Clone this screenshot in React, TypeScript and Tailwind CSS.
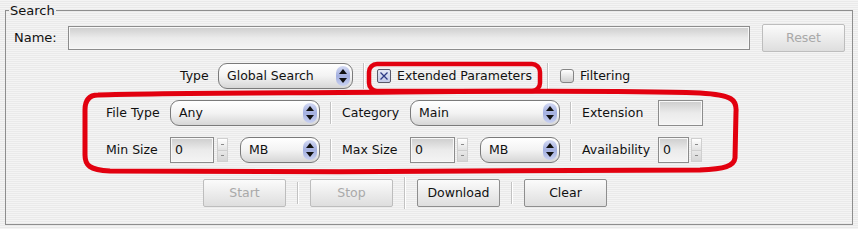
import React from "react";

const Sep: React.FC<{ h?: string }> = ({ h = "h-[22px]" }) => (
  <span className={`w-px ${h} bg-[#c2c2c2] shadow-[1px_0_0_#ffffff]`} />
);

const Arrows: React.FC = () => (
  <span className="absolute right-[2px] top-[2px] bottom-[2px] flex w-[14px] flex-col items-center justify-between rounded-full bg-gradient-to-b from-[#d4daf4] via-[#a3afdf] to-[#c8d0f0] py-[3px]">
    <svg width="8" height="5" viewBox="0 0 8 5">
      <path d="M0 5 L4 0 L8 5 Z" fill="#111" />
    </svg>
    <svg width="8" height="5" viewBox="0 0 8 5">
      <path d="M0 0 L8 0 L4 5 Z" fill="#111" />
    </svg>
  </span>
);

const Combo: React.FC<{ w: string; value: string }> = ({ w, value }) => (
  <div
    className={`relative flex h-[26px] ${w} items-center rounded-[9px] border border-[#7a7a7a] bg-gradient-to-b from-white via-[#f3f3f3] to-[#d6d6d6] pl-[8px]`}
  >
    {value}
    <Arrows />
  </div>
);

const Field: React.FC<{ w: string; h?: string; value?: string }> = ({ w, h = "h-[26px]", value }) => (
  <div
    className={`flex ${h} ${w} items-center border border-[#8c8c8c] bg-gradient-to-b from-[#cdcdcd] via-[#ebebeb] to-[#f4f4f4] pl-[4px] shadow-[inset_0_0_0_1px_#f8f8f8]`}
  >
    {value}
  </div>
);

const Spin: React.FC<{ w: string; gap: string }> = ({ w, gap }) => (
  <div className="flex items-center">
    <Field w={w} value="0" />
    <div className={`${gap} flex h-[24px] w-[11px] flex-col border border-[#cfcfcf]`}>
      <span className="flex flex-1 items-center justify-center border-b border-[#cfcfcf] bg-gradient-to-b from-white to-[#e2e2e2]">
        <span className="h-px w-[3px] bg-[#8a8a8a]" />
      </span>
      <span className="flex flex-1 items-center justify-center bg-gradient-to-b from-[#e8e8e8] to-[#d6d6d6]">
        <span className="h-px w-[3px] bg-[#8a8a8a]" />
      </span>
    </div>
  </div>
);

const Button: React.FC<{ label: string; disabled?: boolean }> = ({ label, disabled }) => (
  <div
    className={`flex h-[28px] w-[83px] items-center justify-center rounded-[2px] border bg-gradient-to-b from-[#fbfbfb] to-[#dedede] ${
      disabled ? "border-[#bdbdbd] text-[#a9a9a9]" : "border-[#8e8e8e] text-[#111]"
    }`}
  >
    {label}
  </div>
);

const Check: React.FC<{ checked?: boolean }> = ({ checked }) =>
  checked ? (
    <span className="flex h-[14px] w-[14px] items-center justify-center rounded-[2px] border border-[#5a5a6a] bg-gradient-to-b from-[#e4e7f6] to-[#c4cbe8]">
      <svg width="10" height="10" viewBox="0 0 10 10">
        <path d="M1.5 1.5 L8.5 8.5 M8.5 1.5 L1.5 8.5" stroke="#2e3a86" strokeWidth="1.3" />
      </svg>
    </span>
  ) : (
    <span className="block h-[14px] w-[14px] rounded-[3px] border border-[#858585] bg-gradient-to-b from-white to-[#cfcfcf]" />
  );

export default function App() {
  return (
    <div className="relative h-[229px] w-[858px] overflow-hidden bg-[repeating-linear-gradient(to_bottom,#f4f4f4_0px,#f4f4f4_1px,#eaeaea_1px,#eaeaea_2px)] pl-[5px] pt-[3px] font-['DejaVu_Sans',sans-serif] text-[12.5px] text-[#111]">
      <fieldset className="h-[222px] w-[848px] border border-[#8e8e8e]">
        <legend className="ml-[3px] px-[1px] text-[13px] leading-[15px]">Search</legend>

        {/* name row */}
        <div className="mt-[6px] flex h-[28px] items-center pl-[8px]">
          <span className="w-[54px] text-[13px]">Name:</span>
          <Field w="w-[682px]" h="h-[24px]" />
          <div className="ml-[12px]">
            <Button label="Reset" disabled />
          </div>
        </div>

        {/* type row */}
        <div className="mt-[10px] flex h-[28px] items-center pl-[174px]">
          <span className="w-[38px]">Type</span>
          <Combo w="w-[135px]" value="Global Search" />
          <span className="ml-[10px] flex">
            <Sep h="h-[26px]" />
          </span>
          <span className="ml-[13px]">
            <Check checked />
          </span>
          <span className="ml-[6px] w-[140px] whitespace-nowrap">Extended Parameters</span>
          <span className="ml-[10px] flex">
            <Sep h="h-[26px]" />
          </span>
          <span className="ml-[12px]">
            <Check />
          </span>
          <span className="ml-[6px]">Filtering</span>
        </div>

        {/* file type row */}
        <div className="mt-[10px] flex h-[26px] items-center pl-[100px]">
          <span className="w-[64px]">File Type</span>
          <Combo w="w-[150px]" value="Any" />
          <span className="ml-[10px] flex">
            <Sep />
          </span>
          <span className="ml-[11px] w-[68px]">Category</span>
          <Combo w="w-[150px]" value="Main" />
          <span className="ml-[10px] flex">
            <Sep />
          </span>
          <span className="ml-[11px] w-[76px]">Extension</span>
          <Field w="w-[45px]" />
        </div>

        {/* size row */}
        <div className="mt-[11px] flex h-[26px] items-center pl-[100px]">
          <span className="w-[64px]">Min Size</span>
          <Spin w="w-[44px]" gap="ml-[3px]" />
          <span className="ml-[12px]">
            <Combo w="w-[80px]" value="MB" />
          </span>
          <span className="ml-[10px] flex">
            <Sep />
          </span>
          <span className="ml-[11px] w-[68px]">Max Size</span>
          <Spin w="w-[45px]" gap="ml-[2px]" />
          <span className="ml-[12px]">
            <Combo w="w-[80px]" value="MB" />
          </span>
          <span className="ml-[10px] flex">
            <Sep />
          </span>
          <span className="ml-[11px] w-[76px]">Availability</span>
          <Spin w="w-[31px]" gap="ml-[2px]" />
        </div>

        {/* action row */}
        <div className="mt-[16px] flex h-[28px] items-center pl-[197px]">
          <Button label="Start" disabled />
          <span className="ml-[11px] flex">
            <Sep />
          </span>
          <span className="ml-[12px]">
            <Button label="Stop" disabled />
          </span>
          <span className="ml-[11px] flex">
            <Sep h="h-[32px]" />
          </span>
          <span className="ml-[12px]">
            <Button label="Download" />
          </span>
          <span className="ml-[11px] flex">
            <Sep />
          </span>
          <span className="ml-[12px]">
            <Button label="Clear" />
          </span>
        </div>
      </fieldset>

      {/* red annotation marks */}
      <svg className="pointer-events-none absolute left-0 top-0" width="858" height="229" viewBox="0 0 858 229">
        <rect x="369" y="64" width="171" height="27" rx="8" fill="none" stroke="#e2000f" strokeWidth="4.5" />
        <path
          d="M98 95 C150 93 300 93 400 92 C520 91 640 91 700 93 C733 95 737 100 736 112 L735 158 C734 166 725 169 700 170 C560 172 300 172 110 171 C89 170 85 165 85 155 L85 110 C85 99 90 95 98 95 Z"
          fill="none"
          stroke="#e2000f"
          strokeWidth="5"
        />
      </svg>
    </div>
  );
}
